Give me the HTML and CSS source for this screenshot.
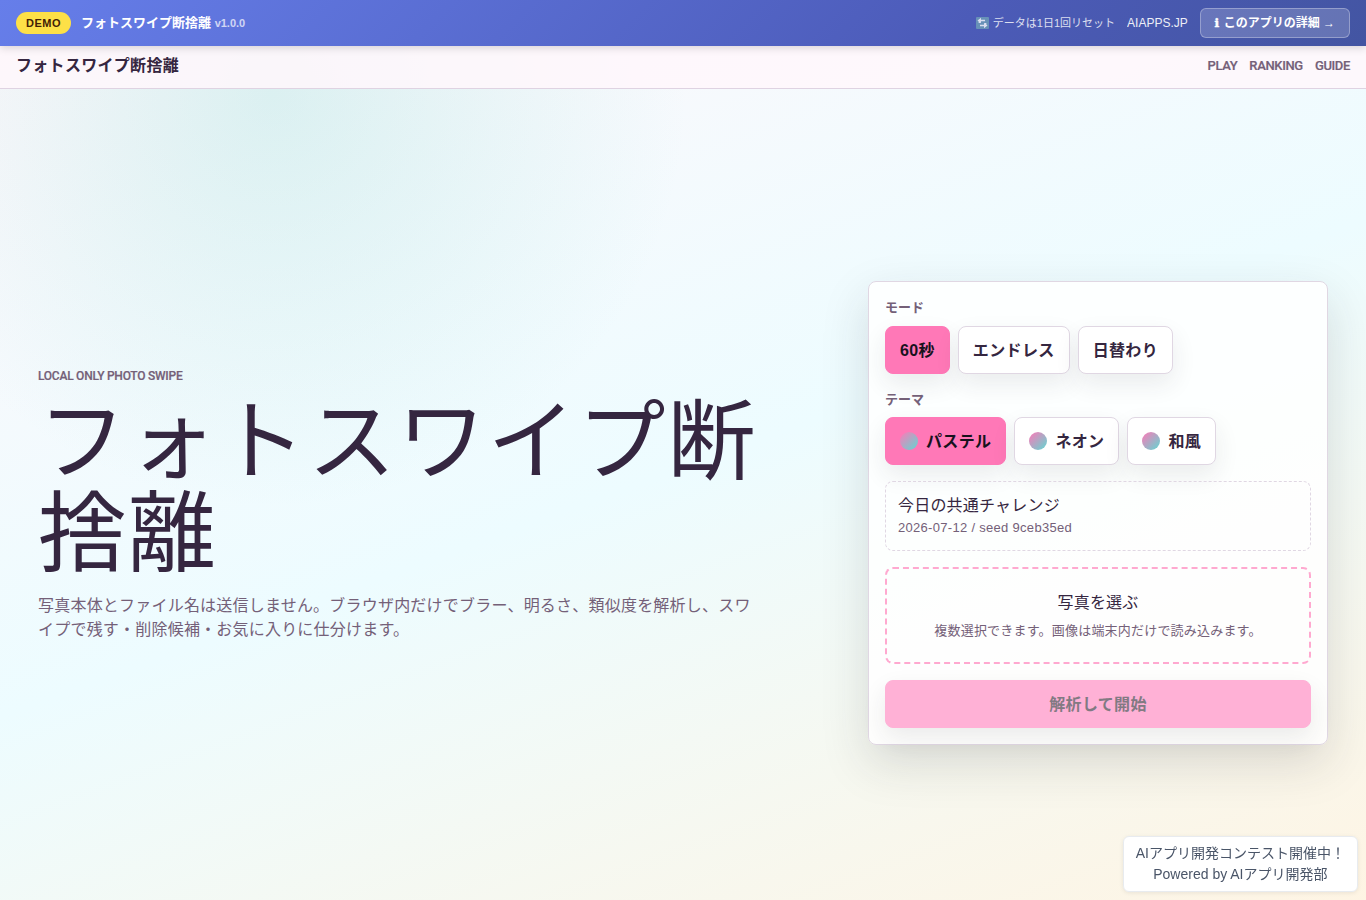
FILE: index.html
```html
<!DOCTYPE html>
<html lang="ja">

<head>
    <meta charset="UTF-8" />
    <meta name="viewport" content="width=device-width, initial-scale=1" />
    <title>フォトスワイプ断捨離</title>
    <link rel="stylesheet" href="styles.css">
</head>

<body>
    <div class="demo-bar">
        <div class="demo-left">
            <span class="demo-badge">DEMO</span>
            <span class="demo-name">フォトスワイプ断捨離 <small>v1.0.0</small></span>
        </div>
        <div class="demo-right">
            <span class="demo-reset">
                <svg class="reset-icon" viewBox="0 0 26 24" aria-hidden="true">
                    <rect width="26" height="24" rx="2" fill="#6f9fb8" />
                    <path d="M7 12V9q0-2 2-2h9M19 12v3q0 2-2 2H8" fill="none" stroke="#fff" stroke-width="3.400" />
                    <path d="M10 1.500v11L3 7zM16 11.500v11l7-5.500z" fill="#fff" />
                </svg>
                データは1日1回リセット</span>
            <a class="demo-site" href="#">AIAPPS.JP</a>
            <a class="demo-detail" href="#"><span class="info-mark">ℹ</span> このアプリの詳細 →</a>
        </div>
    </div>

    <header class="site-header">
        <a class="brand" href="#">フォトスワイプ断捨離</a>
        <nav class="site-nav">
            <a href="#">PLAY</a>
            <a href="#">RANKING</a>
            <a href="#">GUIDE</a>
        </nav>
    </header>

    <main class="hero">
        <section class="hero-copy">
            <p class="eyebrow">LOCAL ONLY PHOTO SWIPE</p>
            <h1>フォトスワイプ断捨離</h1>
            <p class="lead">写真本体とファイル名は送信しません。ブラウザ内だけでブラー、明るさ、類似度を解析し、スワイプで残す・削除候補・お気に入りに仕分けます。</p>
        </section>

        <section class="panel">
            <div class="field">
                <span class="field-label">モード</span>
                <div class="choices">
                    <button class="choice active" type="button">60秒</button>
                    <button class="choice" type="button">エンドレス</button>
                    <button class="choice" type="button">日替わり</button>
                </div>
            </div>
            <div class="field">
                <span class="field-label">テーマ</span>
                <div class="choices">
                    <button class="choice active" type="button"><span class="swatch"></span>パステル</button>
                    <button class="choice" type="button"><span class="swatch"></span>ネオン</button>
                    <button class="choice" type="button"><span class="swatch"></span>和風</button>
                </div>
            </div>
            <div class="challenge">
                <span>今日の共通チャレンジ</span>
                <small class="seed">2026-07-12 / seed 9ceb35ed</small>
            </div>
            <div class="dropzone">
                <span>写真を選ぶ</span>
                <small>複数選択できます。画像は端末内だけで読み込みます。</small>
            </div>
            <button class="start" type="button" disabled>解析して開始</button>
        </section>
    </main>

    <div class="powered">AIアプリ開発コンテスト開催中！<br>Powered by AIアプリ開発部</div>
</body>

</html>
```

FILE: styles.css
```css
:root {
    --ink: #352640;
    --muted: #746078;
    --line: #e0d7e3;
    --accent: #ff78b7;
    --font: "Liberation Sans", "Noto Sans CJK JP", sans-serif;
    --label-font: Roboto, "Liberation Sans", sans-serif;
}

* {
    box-sizing: border-box;
}

html {
    height: 937px;
    overflow: hidden;
}

body {
    margin: 0;
    font-family: var(--font);
    font-size: 16px;
    line-height: 1.5;
    color: var(--ink);
    background:
        radial-gradient(circle at 20% 10%, rgba(126, 216, 208, 0.25), transparent 30%),
        linear-gradient(160deg, #fff7fb 0%, #edfcff 50%, #fff4e2 100%);
}

a {
    color: inherit;
    text-decoration: none;
}

/* デモバー */
.demo-bar {
    position: relative;
    z-index: 2;
    display: flex;
    align-items: center;
    justify-content: space-between;
    height: 46px;
    padding: 0 16px;
    color: #fff;
    background: linear-gradient(135deg, #667eea 0%, #4c5bb8 70%, #4355a2 100%);
    box-shadow: 0 2px 8px rgba(0, 0, 0, 0.15);
}

.demo-left,
.demo-right {
    display: flex;
    align-items: center;
}

.demo-left {
    gap: 10px;
}

.demo-right {
    gap: 12px;
    font-size: 12px;
}

.demo-badge {
    padding: 3px 10px;
    border-radius: 11px;
    font-size: 11px;
    font-weight: bold;
    line-height: 16px;
    letter-spacing: 0.5px;
    color: #422006;
    background: #fde047;
}

.demo-name {
    font-size: 13px;
    font-weight: bold;
}

.demo-name small {
    font-size: 11px;
    opacity: 0.7;
}

.demo-reset {
    display: flex;
    align-items: center;
    gap: 4px;
    font-size: 11px;
    opacity: 0.8;
}

.reset-icon {
    width: 13px;
    height: 12px;
}

.demo-site {
    opacity: 0.9;
}

.demo-detail {
    padding: 5px 14px;
    border: 1px solid rgba(255, 255, 255, 0.3);
    border-radius: 6px;
    font-weight: bold;
    line-height: 18px;
    background: rgba(255, 255, 255, 0.18);
}

.info-mark {
    font-family: "DejaVu Sans", sans-serif;
    -webkit-text-stroke: 0.5px #fff;
    margin-right: 1px;
}

/* ヘッダー */
.site-header {
    display: flex;
    align-items: center;
    justify-content: space-between;
    height: 43px;
    padding: 0 16px 2px;
    border-bottom: 1px solid #dfd3e2;
    background: rgba(255, 247, 251, 0.85);
}

.brand {
    font-weight: bold;
    letter-spacing: 0.3px;
}

.site-nav {
    display: flex;
    gap: 12px;
    font-family: var(--label-font);
    font-size: 13px;
    font-weight: 500;
    letter-spacing: -0.35px;
    color: var(--muted);
    -webkit-text-stroke: 0.2px;
}

/* メイン */
.hero {
    display: grid;
    grid-template-columns: 1fr 460px;
    align-items: center;
    gap: 100px;
    height: 848px;
    padding: 0 38px;
}

.eyebrow {
    margin: 0;
    font-family: var(--label-font);
    font-size: 12px;
    font-weight: 500;
    line-height: 17px;
    letter-spacing: -0.25px;
    color: var(--muted);
    -webkit-text-stroke: 0.2px;
}

h1 {
    margin: 11px 0 14px;
    font-size: 88px;
    font-weight: normal;
    line-height: 92.4px;
    letter-spacing: 1.9px;
}

.lead {
    max-width: 720px;
    margin: 0 0 16px;
    letter-spacing: 0.21px;
    color: var(--muted);
}

.panel {
    display: grid;
    gap: 16px;
    padding: 16px;
    border: 1px solid var(--line);
    border-radius: 8px;
    background: rgba(255, 255, 255, 0.85);
    box-shadow: 0 18px 48px rgba(40, 40, 50, 0.15);
}

.field {
    display: grid;
    gap: 8px;
}

.field-label {
    font-size: 13px;
    font-weight: bold;
    color: var(--muted);
}

.choices {
    display: flex;
    gap: 8px;
}

.choice,
.start {
    display: flex;
    align-items: center;
    justify-content: center;
    gap: 8px;
    height: 48px;
    padding: 0 14px 2px;
    border: 1px solid var(--line);
    border-radius: 8px;
    font: bold 16px var(--font);
    letter-spacing: 0.35px;
    color: var(--ink);
    background: #fff;
    box-shadow: 0 10px 24px rgba(40, 40, 50, 0.09);
}

.choice.active {
    border-color: var(--accent);
    color: #17121d;
    background: var(--accent);
}

.swatch {
    width: 18px;
    height: 18px;
    margin-top: 2px;
    border-radius: 50%;
    background: linear-gradient(135deg, #ff78b7, #5fd8d2);
}

.challenge {
    display: grid;
    padding: 12px;
    height: 70px;
    border: 1px dashed var(--line);
    border-radius: 8px;
    letter-spacing: 0.2px;
}

.challenge small,
.dropzone small {
    font-size: 13px;
    color: var(--muted);
}

.challenge .seed {
    letter-spacing: 0.3px;
}

.dropzone {
    display: grid;
    align-content: center;
    justify-items: center;
    gap: 6px;
    height: 97px;
    border: 2px dashed #ffa9d0;
    border-radius: 8px;
    letter-spacing: 0.2px;
}

.start {
    border-color: #ffb1d6;
    color: #827a83;
    background: #ffb1d6;
}

/* 右下バッジ */
.powered {
    position: fixed;
    right: 8px;
    bottom: 8px;
    padding: 6px 12px;
    border: 1px solid #e8ebef;
    border-radius: 6px;
    font: 14px/21px var(--font);
    text-align: center;
    color: #4a5568;
    background: #fff;
    box-shadow: 0 1px 4px rgba(0, 0, 0, 0.08);
}
```
